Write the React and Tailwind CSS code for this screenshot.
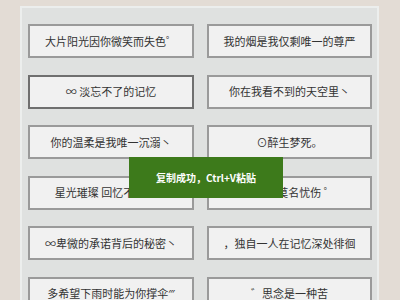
export default function App() {
  const left = [
    "大片阳光因你微笑而失色゜",
    "∞ 淡忘不了的记忆",
    "你的温柔是我唯一沉溺丶",
    "星光璀璨 回忆不再清晰",
    "∞卑微的承诺背后的秘密丶",
    "多希望下雨时能为你撑伞‴",
  ];
  const right = [
    "我的烟是我仅剩唯一的尊严",
    "你在我看不到的天空里丶",
    "⊙醉生梦死。",
    "心底的莫名忧伤 ゜",
    "，独自一人在记忆深处徘徊",
    "゛思念是一种苦",
  ];
  const items = [];
  for (let i = 0; i < 6; i++) {
    items.push({ t: left[i], active: i === 1 });
    items.push({ t: right[i], active: false });
  }
  return (
    <div
      className="relative w-[400px] h-[300px] overflow-hidden bg-[#e3dcd5]"
      style={{ fontFamily: '"Noto Sans CJK SC", "Noto Sans", sans-serif' }}
    >
      <div className="ml-[20px] mt-[6px] w-[359px] h-[320px] border-2 border-[#eceeed] bg-[#dfe1e0] pl-[6px] pt-[16px]">
        <div className="grid grid-cols-[166px_165px] gap-x-[13px] gap-y-[16.5px]">
          {items.map((it, i) => (
            <div
              key={i}
              className={
                "h-[34px] flex items-center justify-center bg-[#f1f1f1] text-[11px] text-[#333333] whitespace-nowrap border-2 " +
                (it.active ? "border-[#6f6f6f]" : "border-[#9a9a9a]")
              }
            >
              {it.t}
            </div>
          ))}
        </div>
      </div>
      <div className="absolute left-[129px] top-[157px] w-[154px] h-[41px] bg-[#3d7a1b] flex items-center justify-center text-white text-[10px] font-bold">
        复制成功，Ctrl+V粘贴
      </div>
    </div>
  );
}
